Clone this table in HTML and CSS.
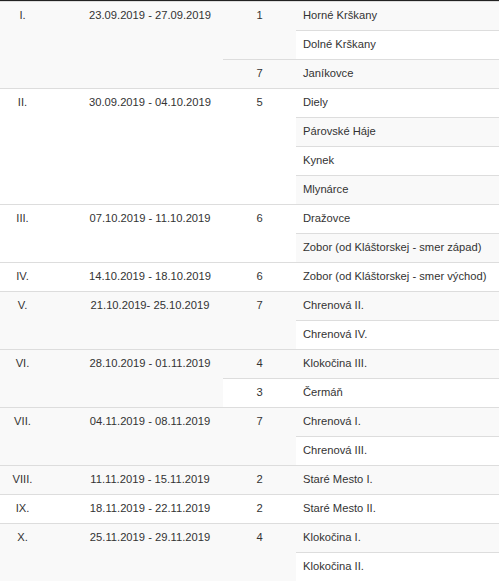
FILE: index.html
```html
<!DOCTYPE html>
<html lang="sk">
<head>
<meta charset="utf-8">
<title>Harmonogram</title>
<link rel="stylesheet" href="styles.css">
</head>
<body>
<div class="wrap">
<table class="schedule">
  <colgroup>
    <col class="c-roman">
    <col class="c-date">
    <col class="c-num">
    <col class="c-place">
  </colgroup>
  <tbody>
    <tr><td class="roman" rowspan="3">I.</td><td class="date" rowspan="3">23.09.2019 - 27.09.2019</td><td class="num" rowspan="2">1</td><td class="place">Horné Krškany</td></tr>
    <tr><td class="place">Dolné Krškany</td></tr>
    <tr><td class="num">7</td><td class="place">Janíkovce</td></tr>
    <tr><td class="roman" rowspan="4">II.</td><td class="date" rowspan="4">30.09.2019 - 04.10.2019</td><td class="num" rowspan="4">5</td><td class="place">Diely</td></tr>
    <tr><td class="place">Párovské Háje</td></tr>
    <tr><td class="place">Kynek</td></tr>
    <tr><td class="place">Mlynárce</td></tr>
    <tr><td class="roman" rowspan="2">III.</td><td class="date" rowspan="2">07.10.2019 - 11.10.2019</td><td class="num" rowspan="2">6</td><td class="place">Dražovce</td></tr>
    <tr><td class="place">Zobor (od Kláštorskej - smer západ)</td></tr>
    <tr><td class="roman">IV.</td><td class="date">14.10.2019 - 18.10.2019</td><td class="num">6</td><td class="place">Zobor (od Kláštorskej - smer východ)</td></tr>
    <tr><td class="roman" rowspan="2">V.</td><td class="date" rowspan="2">21.10.2019- 25.10.2019</td><td class="num" rowspan="2">7</td><td class="place">Chrenová II.</td></tr>
    <tr><td class="place">Chrenová IV.</td></tr>
    <tr><td class="roman" rowspan="2">VI.</td><td class="date" rowspan="2">28.10.2019 - 01.11.2019</td><td class="num">4</td><td class="place">Klokočina III.</td></tr>
    <tr><td class="num">3</td><td class="place">Čermáň</td></tr>
    <tr><td class="roman" rowspan="2">VII.</td><td class="date" rowspan="2">04.11.2019 - 08.11.2019</td><td class="num" rowspan="2">7</td><td class="place">Chrenová I.</td></tr>
    <tr><td class="place">Chrenová III.</td></tr>
    <tr><td class="roman">VIII.</td><td class="date">11.11.2019 - 15.11.2019</td><td class="num">2</td><td class="place">Staré Mesto I.</td></tr>
    <tr><td class="roman">IX.</td><td class="date">18.11.2019 - 22.11.2019</td><td class="num">2</td><td class="place">Staré Mesto II.</td></tr>
    <tr><td class="roman" rowspan="2">X.</td><td class="date" rowspan="2">25.11.2019 - 29.11.2019</td><td class="num" rowspan="2">4</td><td class="place">Klokočina I.</td></tr>
    <tr><td class="place">Klokočina II.</td></tr>
  </tbody>
</table>
</div>
</body>
</html>
```
FILE: styles.css
```css
html, body {
  margin: 0;
  padding: 0;
  background: #fff;
}

body {
  font-family: "Liberation Sans", Arial, sans-serif;
  font-size: 11.2px;
  color: #333;
}

.wrap {
  width: 499px;
  border-top: 1px solid #222;
}

.schedule {
  width: 499px;
  border-collapse: collapse;
  border-spacing: 0;
  table-layout: fixed;
}

.c-roman { width: 45px; }
.c-date { width: 178px; }
.c-num { width: 73px; }
.c-place { width: 203px; }

.schedule td {
  border-top: 1px solid #ddd;
  padding: 7px 7px 8px 7px;
  height: 13px;
  line-height: 13px;
  vertical-align: top;
  white-space: nowrap;
}

.schedule tr:nth-child(odd) td {
  background: #f9f9f9;
}

.schedule td.roman {
  text-align: center;
  padding-left: 0;
  padding-right: 0;
}

.schedule td.date {
  text-align: center;
  padding-left: 32px;
  padding-right: 0;
}

.schedule td.num {
  text-align: center;
  padding-left: 0;
  padding-right: 0;
}

.schedule td.place {
  padding-left: 7px;
}
```
